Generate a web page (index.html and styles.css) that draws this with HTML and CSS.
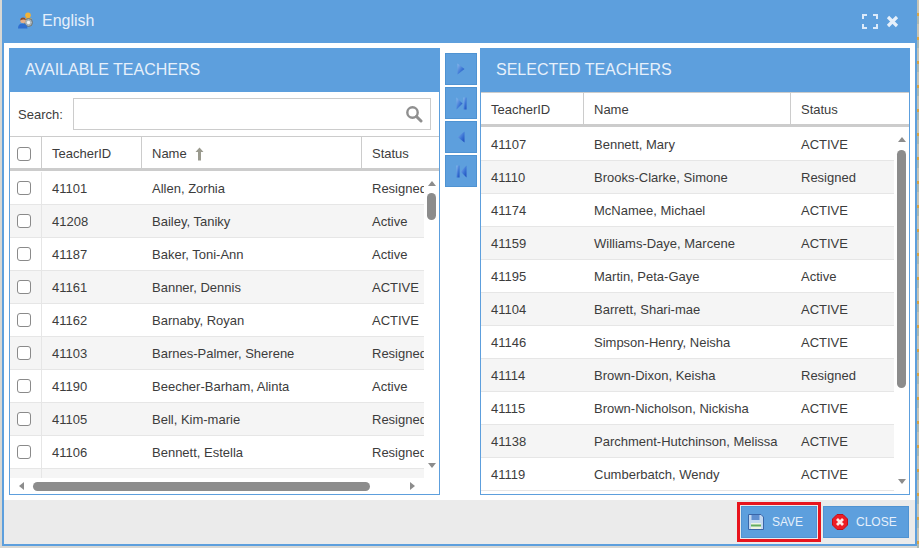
FILE: index.html
```html
<!DOCTYPE html>
<html lang="en">

<head>
  <meta charset="UTF-8">
  <title>English</title>
  <link rel="stylesheet" href="styles.css">
</head>

<body>
  <div id="dialog">
    <div id="titlebar">
      <svg class="title-icon" width="17" height="17" viewBox="0 0 17 17">
        <path d="M6 14 V8 Q6 5.500 10 5.500 Q14 5.500 14 8 V14 Z" fill="#e2b04a" />
        <circle cx="10" cy="3.200" r="2.800" fill="#f2b338" />
        <circle cx="10.500" cy="10.500" r="4" fill="#a8b3b8" stroke="#66737a" />
        <circle cx="10.500" cy="10.500" r="1.700" fill="#eef2f3" />
        <circle cx="5" cy="8.500" r="2.700" fill="#e6b08a" />
        <path d="M2.200 8.500 Q2.200 5.500 5 5.500 Q7.800 5.500 7.800 8 Q5 6.800 2.200 8.500 Z" fill="#8a4b2c" />
        <path d="M0 16.500 Q0 11.500 4.500 11.500 Q9 11.500 9.500 16.500 Z" fill="#2f6fd0" />
      </svg>
      <span id="title">English</span>
      <span class="spacer"></span>
      <svg class="win-icon" width="16" height="15" viewBox="0 0 16 15">
        <path d="M1 5 V1 H5 M11 1 H15 V5 M15 10 V14 H11 M5 14 H1 V10" fill="none" stroke="#dceafa" stroke-width="2" />
      </svg>
      <svg class="win-icon" width="13" height="13" viewBox="0 0 13 13">
        <path d="M2 2 L11 11 M11 2 L2 11" fill="none" stroke="#e6f0fb" stroke-width="3.200" />
      </svg>
    </div>

    <div id="content">
      <div class="panel" id="available">
        <div class="panel-head">AVAILABLE TEACHERS</div>
        <div class="search-row">
          <label for="search">Search:</label>
          <div class="search-box">
            <input type="text" id="search">
            <svg width="18" height="18" viewBox="0 0 18 18">
              <circle cx="7.500" cy="7.500" r="5.200" fill="none" stroke="#8f8f8f" stroke-width="2.400" />
              <path d="M11.500 11.500 L16 16" stroke="#8f8f8f" stroke-width="3" stroke-linecap="round" />
            </svg>
          </div>
        </div>
        <div class="table-head">
          <div class="th col-check"><span class="check"></span></div>
          <div class="th col-id">TeacherID</div>
          <div class="th col-name">Name
            <svg class="sort" width="9" height="14" viewBox="0 0 9 14">
              <path d="M4.500 0.500 L8.500 5 H6 V13.500 H3 V5 H0.500 Z" fill="#9a9a8e" />
            </svg>
          </div>
          <div class="th col-status">Status</div>
        </div>
        <div class="table-body">
          <div class="rows">
            <div class="row"><div class="td col-check"><span class="check"></span></div><div class="td col-id">41101</div><div class="td col-name">Allen, Zorhia</div><div class="td col-status">Resigned</div></div>
            <div class="row"><div class="td col-check"><span class="check"></span></div><div class="td col-id">41208</div><div class="td col-name">Bailey, Taniky</div><div class="td col-status">Active</div></div>
            <div class="row"><div class="td col-check"><span class="check"></span></div><div class="td col-id">41187</div><div class="td col-name">Baker, Toni-Ann</div><div class="td col-status">Active</div></div>
            <div class="row"><div class="td col-check"><span class="check"></span></div><div class="td col-id">41161</div><div class="td col-name">Banner, Dennis</div><div class="td col-status">ACTIVE</div></div>
            <div class="row"><div class="td col-check"><span class="check"></span></div><div class="td col-id">41162</div><div class="td col-name">Barnaby, Royan</div><div class="td col-status">ACTIVE</div></div>
            <div class="row"><div class="td col-check"><span class="check"></span></div><div class="td col-id">41103</div><div class="td col-name">Barnes-Palmer, Sherene</div><div class="td col-status">Resigned</div></div>
            <div class="row"><div class="td col-check"><span class="check"></span></div><div class="td col-id">41190</div><div class="td col-name">Beecher-Barham, Alinta</div><div class="td col-status">Active</div></div>
            <div class="row"><div class="td col-check"><span class="check"></span></div><div class="td col-id">41105</div><div class="td col-name">Bell, Kim-marie</div><div class="td col-status">Resigned</div></div>
            <div class="row"><div class="td col-check"><span class="check"></span></div><div class="td col-id">41106</div><div class="td col-name">Bennett, Estella</div><div class="td col-status">Resigned</div></div>
            <div class="row"><div class="td col-check"><span class="check"></span></div><div class="td col-id"></div><div class="td col-name"></div><div class="td col-status"></div></div>
          </div>
          <div class="vbar">
            <span class="arrow-up"></span>
            <span class="track"><span class="thumb thumb-left"></span></span>
            <span class="arrow-down"></span>
          </div>
        </div>
        <div class="hbar">
          <span class="arrow-left"></span>
          <span class="hthumb"></span>
          <span class="arrow-right"></span>
        </div>
      </div>

      <div id="movers">
        <svg width="0" height="0" class="defs">
          <defs>
            <linearGradient id="moverFill" x1="0" y1="0" x2="1" y2="1">
              <stop offset="0" stop-color="#8dbbec" />
              <stop offset="0.550" stop-color="#3f78d6" />
              <stop offset="1" stop-color="#1a48bc" />
            </linearGradient>
          </defs>
        </svg>
        <button class="mover">
          <svg width="8" height="12" viewBox="0 0 8 12"><path d="M0.500 0.500 L7.500 6 L0.500 11.500 Z" fill="url(#moverFill)" /></svg>
        </button>
        <button class="mover">
          <svg width="11" height="13" viewBox="0 0 11 13"><path d="M0.500 0.500 L6.500 6.500 L0.500 12.500 Z" fill="url(#moverFill)" /><path d="M7.500 0.500 H10.500 V12.500 H7.500 Z" fill="url(#moverFill)" /></svg>
        </button>
        <button class="mover">
          <svg width="8" height="12" viewBox="0 0 8 12"><path d="M7.500 0.500 L0.500 6 L7.500 11.500 Z" fill="url(#moverFill)" /></svg>
        </button>
        <button class="mover">
          <svg width="11" height="13" viewBox="0 0 11 13"><path d="M10.500 0.500 L4.500 6.500 L10.500 12.500 Z" fill="url(#moverFill)" /><path d="M0.500 0.500 H3.500 V12.500 H0.500 Z" fill="url(#moverFill)" /></svg>
        </button>
      </div>

      <div class="panel" id="selected">
        <div class="panel-head">SELECTED TEACHERS</div>
        <div class="table-head">
          <div class="th col-id2">TeacherID</div>
          <div class="th col-name2">Name</div>
          <div class="th col-status2">Status</div>
        </div>
        <div class="table-body">
          <div class="rows">
            <div class="row"><div class="td col-id2">41107</div><div class="td col-name2">Bennett, Mary</div><div class="td col-status2">ACTIVE</div></div>
            <div class="row"><div class="td col-id2">41110</div><div class="td col-name2">Brooks-Clarke, Simone</div><div class="td col-status2">Resigned</div></div>
            <div class="row"><div class="td col-id2">41174</div><div class="td col-name2">McNamee, Michael</div><div class="td col-status2">ACTIVE</div></div>
            <div class="row"><div class="td col-id2">41159</div><div class="td col-name2">Williams-Daye, Marcene</div><div class="td col-status2">ACTIVE</div></div>
            <div class="row"><div class="td col-id2">41195</div><div class="td col-name2">Martin, Peta-Gaye</div><div class="td col-status2">Active</div></div>
            <div class="row"><div class="td col-id2">41104</div><div class="td col-name2">Barrett, Shari-mae</div><div class="td col-status2">ACTIVE</div></div>
            <div class="row"><div class="td col-id2">41146</div><div class="td col-name2">Simpson-Henry, Neisha</div><div class="td col-status2">ACTIVE</div></div>
            <div class="row"><div class="td col-id2">41114</div><div class="td col-name2">Brown-Dixon, Keisha</div><div class="td col-status2">Resigned</div></div>
            <div class="row"><div class="td col-id2">41115</div><div class="td col-name2">Brown-Nicholson, Nickisha</div><div class="td col-status2">ACTIVE</div></div>
            <div class="row"><div class="td col-id2">41138</div><div class="td col-name2">Parchment-Hutchinson, Melissa</div><div class="td col-status2">ACTIVE</div></div>
            <div class="row"><div class="td col-id2">41119</div><div class="td col-name2">Cumberbatch, Wendy</div><div class="td col-status2">ACTIVE</div></div>
          </div>
          <div class="vbar">
            <span class="arrow-up"></span>
            <span class="track"><span class="thumb thumb-right"></span></span>
            <span class="arrow-down"></span>
          </div>
        </div>
      </div>
    </div>

    <div id="footer">
      <button class="foot-btn" id="save">
        <svg width="16" height="16" viewBox="0 0 16 16">
          <path d="M0.500 0.500 H13 L15.500 3 V15.500 H0.500 Z" fill="#c4d8f0" stroke="#3a66a8" />
          <path d="M3.500 1 H11.500 V6 H3.500 Z" fill="#5f8fd0" />
          <path d="M3 9 H13 V15 H3 Z" fill="#eef3e4" />
          <path d="M3 11.500 H13" stroke="#63ad5f" stroke-width="2" />
        </svg>
        SAVE
      </button>
      <button class="foot-btn" id="close">
        <svg width="16" height="16" viewBox="0 0 16 16">
          <path d="M5 0.500 H11 L15.500 5 V11 L11 15.500 H5 L0.500 11 V5 Z" fill="#ee1c25" stroke="#c2101a" />
          <path d="M5 5 L11 11 M11 5 L5 11" stroke="#ffe9e6" stroke-width="2.800" />
        </svg>
        CLOSE
      </button>
    </div>
  </div>
</body>

</html>
```

FILE: styles.css
```css
* {
  margin: 0;
  padding: 0;
  box-sizing: border-box;
}

html, body {
  width: 919px;
  height: 548px;
  overflow: hidden;
}

body {
  background: repeating-linear-gradient(#c8c4b4 0 13px, #dba545 13px 16px, #aeb8b0 16px 24px) right / 2px 100% no-repeat, #d8d8d4;
  font-family: "Liberation Sans", Arial, sans-serif;
  font-size: 13px;
  color: #3c3c3c;
  padding-left: 2px;
}

#dialog {
  display: flex;
  flex-direction: column;
  width: 915px;
  height: 546px;
  border: 2px solid #5d9fdd;
  border-top: none;
  background: #fff;
}

#titlebar {
  display: flex;
  align-items: center;
  flex: 0 0 43px;
  background: #5d9fdd;
  color: #e6f0fb;
  padding: 0 18px 2px 16px;
  margin: 0 -2px;
}

#title {
  font-size: 16px;
  margin-left: 7px;
}

.spacer {
  flex: 1;
}

.win-icon {
  margin: 2px 0 0 8px;
}

#content {
  display: flex;
  flex: 1;
  padding: 5px;
  min-height: 0;
}

.panel {
  display: flex;
  flex-direction: column;
  flex: 0 0 431px;
  border: 1px solid #5d9fdd;
  border-top: none;
  overflow: hidden;
}

#selected {
  flex-basis: 430px;
  margin-left: 3px;
}

.panel-head {
  flex: 0 0 44px;
  display: flex;
  align-items: center;
  background: #5d9fdd;
  color: #e6f0fb;
  font-size: 16px;
  padding-left: 16px;
  margin: 0 -1px;
}

.search-row {
  flex: 0 0 45px;
  display: flex;
  align-items: center;
  padding: 0 8px 1px;
  border-bottom: 1px solid #ccc;
}

.search-row label {
  padding-top: 2px;
}

.search-box {
  flex: 1;
  display: flex;
  align-items: center;
  height: 32px;
  margin-left: 10px;
  border: 1px solid #ccc;
  padding-right: 7px;
}

.search-box input {
  flex: 1;
  min-width: 0;
  border: none;
  outline: none;
  height: 100%;
}

.table-head {
  display: flex;
  flex: 0 0 34px;
  border-bottom: 3px solid #ccc;
}

#selected .table-head {
  flex-basis: 35px;
  border-top: 1px solid #ccc;
}

.th {
  display: flex;
  align-items: center;
  padding: 2px 0 0 10px;
  border-right: 1px solid #ccc;
  flex-shrink: 0;
}

.th:last-child {
  border-right: none;
}

.sort {
  margin-left: 8px;
}

.table-body {
  display: flex;
  flex: 1;
  min-height: 0;
}

.rows {
  flex: 1;
  min-width: 0;
  overflow: hidden;
  padding-top: 1px;
}

.row {
  display: flex;
  height: 33px;
  border-bottom: 1px solid #e6e6e6;
}

.row:nth-child(even) {
  background: #f5f5f5;
}

.td {
  display: flex;
  align-items: center;
  padding-left: 10px;
  white-space: nowrap;
  flex-shrink: 0;
}

.col-check {
  width: 32px;
  padding-left: 7px;
  border-right: 1px solid #e6e6e6;
}

.th.col-check {
  border-right-color: #ccc;
}

.col-id {
  width: 100px;
}

.col-name {
  width: 220px;
}

.col-status {
  width: 77px;
}

.col-id2 {
  width: 103px;
}

.col-name2 {
  width: 207px;
}

.col-status2 {
  width: 118px;
}

.check {
  display: block;
  width: 14px;
  height: 14px;
  border: 1px solid #8a8a8a;
  border-radius: 3px;
  background: #fff;
}

.vbar {
  flex: 0 0 15px;
  display: flex;
  flex-direction: column;
  align-items: center;
  background: #fff;
}

.track {
  flex: 1;
  width: 9px;
}

.thumb {
  display: block;
  width: 9px;
  border-radius: 5px;
  background: #8c8c8c;
}

.thumb-left {
  height: 27px;
}

.thumb-right {
  height: 238px;
  margin-top: 1px;
}

.arrow-up, .arrow-down, .arrow-left, .arrow-right {
  display: block;
  width: 0;
  height: 0;
  border-style: solid;
  border-color: transparent;
}

.arrow-up {
  border-width: 0 4.500px 5px;
  border-bottom-color: #8c8c8c;
  margin: 10px 0 7px;
}

.arrow-down {
  border-width: 5px 4.500px 0;
  border-top-color: #8c8c8c;
  margin: 5px 0 10px;
}

.hbar {
  flex: 0 0 16px;
  display: flex;
  align-items: center;
  background: #fff;
}

.arrow-left {
  border-width: 4.500px 5px 4.500px 0;
  border-right-color: #8c8c8c;
  margin-left: 9px;
}

.arrow-right {
  border-width: 4.500px 0 4.500px 5px;
  border-left-color: #8c8c8c;
  margin-left: 40px;
}

.hthumb {
  width: 337px;
  height: 9px;
  margin-left: 9px;
  border-radius: 5px;
  background: #8c8c8c;
}

#movers {
  display: flex;
  flex-direction: column;
  flex: 0 0 37px;
  gap: 2px;
  padding: 5px 0 0 5px;
}

.defs {
  position: absolute;
}

.mover {
  display: flex;
  align-items: center;
  justify-content: center;
  width: 32px;
  height: 32px;
  border: 1px solid #4f93d2;
  background: #5d9fdd;
}

#footer {
  display: flex;
  justify-content: flex-end;
  align-items: center;
  flex: 0 0 44px;
  gap: 6px;
  padding-right: 6px;
  background: #ebebeb;
}

.foot-btn {
  display: flex;
  align-items: center;
  gap: 8px;
  height: 32px;
  padding-left: 6px;
  border: 1px solid #4f93d2;
  background: #5d9fdd;
  color: #e6f0fb;
  font-family: "Liberation Sans", Arial, sans-serif;
  font-size: 12px;
}

#save {
  width: 76px;
  outline: 3px solid #e8141c;
  outline-offset: 1px;
}

#close {
  width: 86px;
  padding-left: 8px;
}
```
